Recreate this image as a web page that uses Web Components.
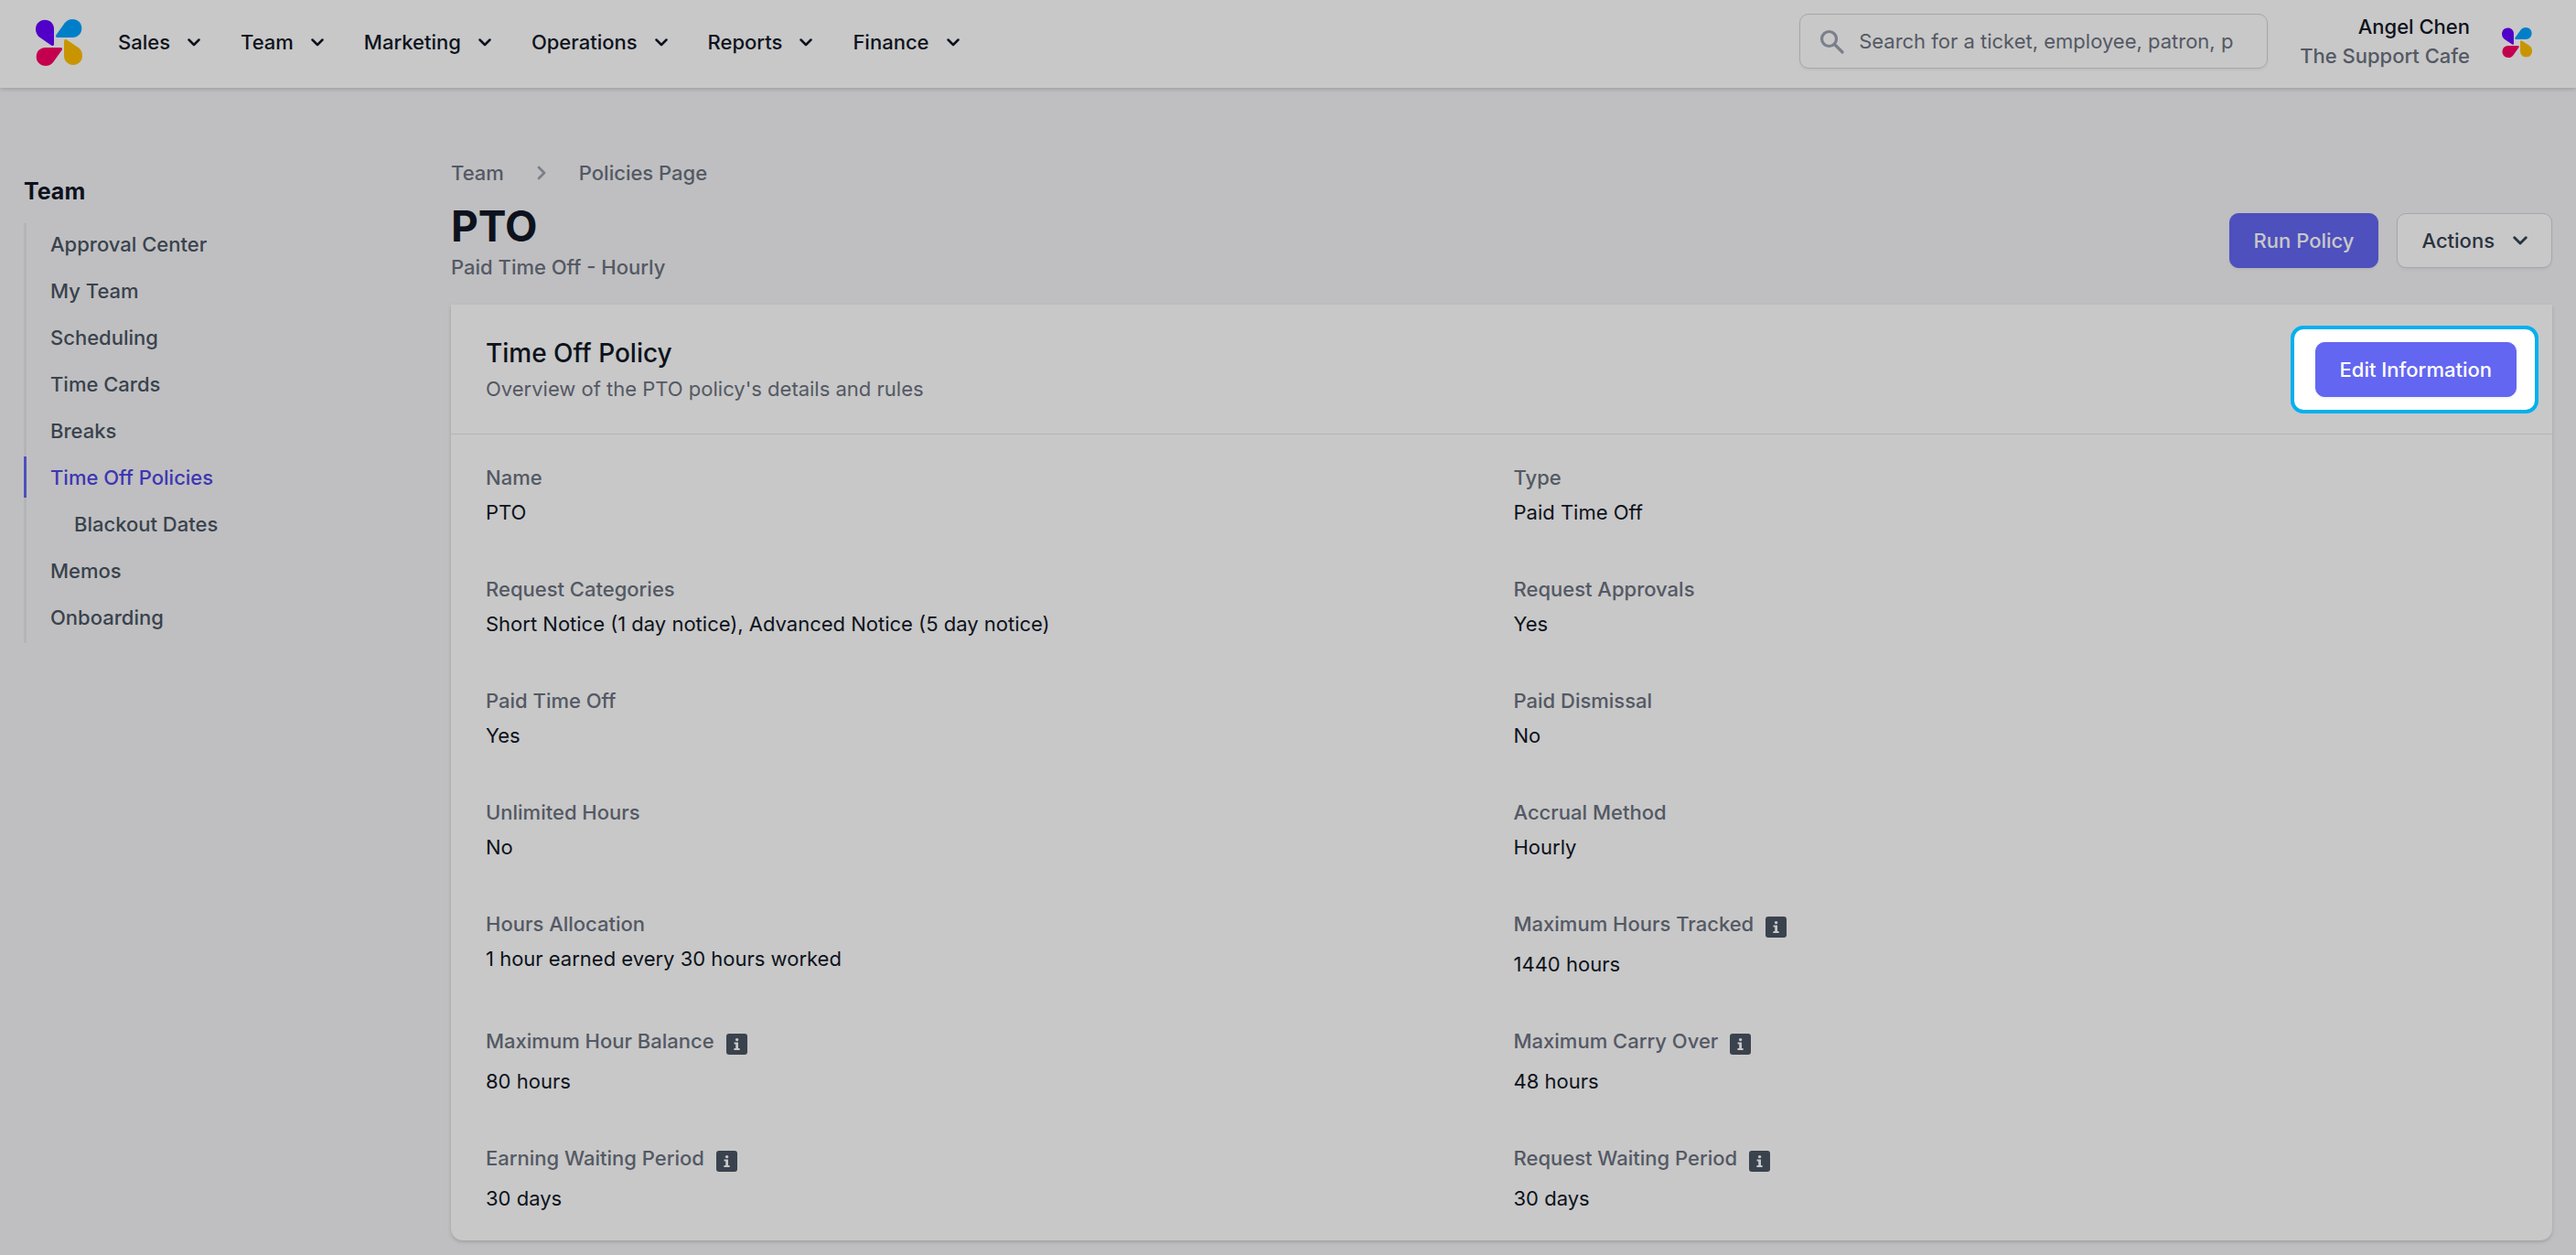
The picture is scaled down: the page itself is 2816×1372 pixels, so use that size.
<!DOCTYPE html>
<html lang="en">
<head>
<meta charset="utf-8">
<title>PTO - Time Off Policies</title>
<style>
  body {
    margin: 0;
    background: #f4f4f6;
    color: #111827;
    font: 400 22px/32px Inter, "Liberation Sans", sans-serif;
  }
</style>
</head>
<body>
<policy-app></policy-app>
<script>
const define = (name, html, setup) => {
  const template = document.createElement('template');
  template.innerHTML = html;
  customElements.define(name, class extends HTMLElement {
    constructor() {
      super();
      this.attachShadow({ mode: 'open' }).append(template.content.cloneNode(true));
    }
    connectedCallback() {
      if (setup) setup(this, this.shadowRoot);
    }
  });
};

define('brand-mark', `
  <style>
    :host { display: block; width: 51px; flex: none; }
    :host([small]) { width: 33px; }
    svg { display: block; width: 100%; height: auto; }
  </style>
  <svg viewBox="57 60 153 153" aria-hidden="true">
    <path fill="#6600ff" d="M117 92C117 74 104 62 87 62C70 62 57 75 57 92C57 104 62 113 71 120L109 146Q117 150 117 142Z"/>
    <path fill="#00a3ff" d="M178 60C195 60 208 73 208 90C208 107 195 120 178 120H128Q120 119 124 112L152 73C159 64 167 60 178 60Z"/>
    <path fill="#fa0064" d="M89 153H138Q147 154 143 161L115 200C108 209 100 213 89 213C72 213 59 200 59 183C59 166 72 153 89 153Z"/>
    <path fill="#ffbf00" d="M150 132Q151 123 158 127L197 153C206 160 210 169 210 180C210 197 197 210 180 210C163 210 150 197 150 180Z"/>
  </svg>`);

define('chevron-icon', `
  <style>
    :host { display: block; width: 14px; flex: none; }
    :host([large]) { width: 16px; }
    svg { display: block; width: 100%; height: auto; }
  </style>
  <svg viewBox="0 0 14 9" fill="none" stroke="currentColor" stroke-width="2.5" stroke-linecap="round" stroke-linejoin="round" aria-hidden="true">
    <path d="M1.5 1.5L7 7L12.5 1.5"/>
  </svg>`);

define('nav-menu', `
  <style>
    :host { display: block; }
    button {
      display: flex; align-items: center; gap: 19px;
      border: 0; padding: 0; background: none;
      color: #111827; font: inherit; font-weight: 500;
    }
  </style>
  <button type="button"><slot></slot><chevron-icon></chevron-icon></button>`);

define('search-box', `
  <style>
    :host { display: block; width: 512px; }
    label {
      display: flex; align-items: center; gap: 16px;
      box-sizing: border-box; height: 60px; padding: 0 16px 0 21px;
      border: 1px solid #d1d5db; border-radius: 10px; background: #fff;
      box-shadow: 0 2px 3px rgba(0, 0, 0, .05);
    }
    svg { width: 27px; height: 27px; flex: none; color: #9ca3af; }
    input {
      flex: 1; min-width: 0; padding: 0; border: 0; outline: 0;
      background: none; color: #111827; font: inherit;
    }
    input::placeholder { color: #6b7280; opacity: 1; }
  </style>
  <label>
    <svg viewBox="0 0 27 27" fill="none" stroke="currentColor" stroke-width="3.2" stroke-linecap="round" aria-hidden="true">
      <circle cx="10.5" cy="10.5" r="8"/><path d="M16.5 16.5L25 25"/>
    </svg>
    <input type="search" aria-label="Search" placeholder="Search for a ticket, employee, patron, p">
  </label>`);

define('app-header', `
  <style>
    :host {
      display: flex; align-items: center; justify-content: space-between;
      box-sizing: border-box; height: 96px; padding: 0 48px 4px 39px;
      background: #fff;
      box-shadow: 0 2px 5px rgba(0, 0, 0, .1), 0 2px 3px rgba(0, 0, 0, .06);
    }
    nav { display: flex; align-items: center; gap: 44px; }
    brand-mark:not([small]) { margin-right: -5px; }
    .right { display: flex; align-items: center; }
    search-box { margin: 0 35px 2px 0; }
    .user { margin-right: 35px; padding-bottom: 2px; text-align: right; color: #6b7280; font-weight: 500; }
    .user strong { display: block; color: #111827; font-weight: 500; }
  </style>
  <nav aria-label="Main">
    <brand-mark></brand-mark>
    <nav-menu>Sales</nav-menu>
    <nav-menu>Team</nav-menu>
    <nav-menu>Marketing</nav-menu>
    <nav-menu>Operations</nav-menu>
    <nav-menu>Reports</nav-menu>
    <nav-menu>Finance</nav-menu>
  </nav>
  <div class="right">
    <search-box></search-box>
    <div class="user"><strong>Angel Chen</strong>The Support Cafe</div>
    <brand-mark small></brand-mark>
  </div>`);

define('side-link', `
  <style>
    :host { display: block; height: 45px; padding-bottom: 6px; border-left: 3px solid #e5e7eb; }
    a {
      display: flex; align-items: center; height: 100%;
      margin-left: -3px; padding-left: 26px; border-left: 3px solid transparent;
      box-sizing: border-box; color: #4b5563; font-weight: 500; text-decoration: none;
    }
    :host([nested]) a { padding-left: 52px; }
    :host([active]) a { border-color: #6366f1; color: #4f46e5; }
  </style>
  <a href="#"><slot></slot></a>`);

define('side-nav', `
  <style>
    :host { display: block; padding-top: 17px; }
    h2 { margin: 0 0 16px; font-size: 25px; line-height: 38px; font-weight: 700; }
  </style>
  <h2>Team</h2>
  <nav aria-label="Team">
    <side-link>Approval Center</side-link>
    <side-link>My Team</side-link>
    <side-link>Scheduling</side-link>
    <side-link>Time Cards</side-link>
    <side-link>Breaks</side-link>
    <side-link active>Time Off Policies</side-link>
    <side-link nested>Blackout Dates</side-link>
    <side-link>Memos</side-link>
    <side-link>Onboarding</side-link>
  </nav>`);

define('ui-button', `
  <style>
    :host { display: block; }
    button {
      display: flex; align-items: center; gap: 20px;
      box-sizing: border-box; height: 60px; padding: 0 26px;
      border: 1px solid #6366f1; border-radius: 10px;
      background: #6366f1; color: #fff;
      box-shadow: 0 2px 3px rgba(0, 0, 0, .05);
      font: inherit; font-weight: 500; white-space: nowrap;
    }
    :host([plain]) button { border-color: #d1d5db; background: #fff; color: #374151; }
  </style>
  <button type="button"><slot></slot></button>`);

define('page-heading', `
  <style>
    :host { display: block; color: #6b7280; font-weight: 500; }
    nav { display: flex; align-items: center; gap: 36px; margin-bottom: 13px; }
    nav svg { width: 10px; height: 16px; color: #9ca3af; }
    a { color: inherit; text-decoration: none; }
    .row { display: flex; align-items: center; justify-content: space-between; }
    h1 { margin: 0; color: #111827; font-size: 46px; line-height: 58px; font-weight: 700; }
    p { margin: 0; }
    .actions { display: flex; gap: 20px; }
  </style>
  <nav aria-label="Breadcrumb">
    <a href="#">Team</a>
    <svg viewBox="0 0 10 16" fill="none" stroke="currentColor" stroke-width="2.8" stroke-linecap="round" stroke-linejoin="round" aria-hidden="true"><path d="M2 2L8 8L2 14"/></svg>
    <a href="#">Policies Page</a>
  </nav>
  <div class="row">
    <div><h1>PTO</h1><p>Paid Time Off - Hourly</p></div>
    <div class="actions">
      <ui-button>Run Policy</ui-button>
      <ui-button plain>Actions<chevron-icon large></chevron-icon></ui-button>
    </div>
  </div>`);

/* Dims the whole page except for the box round its content. */
define('tour-spotlight', `
  <style>
    :host {
      display: block; position: relative; z-index: 10;
      padding: 14px 20px 14px 23px;
      border: 4px solid #00b0f0; border-radius: 14px; background: #fff;
      box-shadow: 0 0 0 4000px rgba(0, 0, 0, .216);
    }
  </style>
  <slot></slot>`);

define('detail-item', `
  <style>
    :host { display: block; }
    .label { display: flex; gap: 13px; margin-bottom: 6px; color: #6b7280; font-weight: 500; }
    svg { display: none; width: 23px; height: 23px; margin-top: 8px; color: #4b5563; }
    :host([info]) .label { height: 38px; }
    :host([info]) svg { display: block; }
  </style>
  <div class="label"><span></span>
    <svg viewBox="0 0 23 23" aria-hidden="true">
      <rect width="23" height="23" rx="3" fill="currentColor"/>
      <circle cx="11.6" cy="6.6" r="1.7" fill="#fff"/>
      <path fill="#fff" d="M8.6 9.6H13V16H14.6V18H8.4V16H10.2V11.6H8.6Z"/>
    </svg>
  </div>
  <slot></slot>`,
  (host, root) => { root.querySelector('span').textContent = host.getAttribute('label'); });

define('policy-card', `
  <style>
    :host {
      display: block; background: #fff; border-radius: 0 0 13px 13px;
      box-shadow: 0 2px 5px rgba(0, 0, 0, .1), 0 2px 3px rgba(0, 0, 0, .06);
    }
    header {
      display: flex; align-items: center; justify-content: space-between;
      height: 141px; padding: 0 15px 0 38px; border-bottom: 1px solid #e5e7eb;
    }
    h2 { margin: 0 0 4px; font-size: 28px; line-height: 38px; font-weight: 500; }
    p { margin: 0; color: #6b7280; }
    .details {
      display: grid; grid-template-columns: 1fr 1fr; gap: 52px 26px;
      padding: 31px 38px 30px;
    }
  </style>
  <header>
    <div><h2>Time Off Policy</h2><p>Overview of the PTO policy's details and rules</p></div>
    <tour-spotlight><ui-button>Edit Information</ui-button></tour-spotlight>
  </header>
  <div class="details">
    <detail-item label="Name">PTO</detail-item>
    <detail-item label="Type">Paid Time Off</detail-item>
    <detail-item label="Request Categories">Short Notice (1 day notice), Advanced Notice (5 day notice)</detail-item>
    <detail-item label="Request Approvals">Yes</detail-item>
    <detail-item label="Paid Time Off">Yes</detail-item>
    <detail-item label="Paid Dismissal">No</detail-item>
    <detail-item label="Unlimited Hours">No</detail-item>
    <detail-item label="Accrual Method">Hourly</detail-item>
    <detail-item label="Hours Allocation">1 hour earned every 30 hours worked</detail-item>
    <detail-item label="Maximum Hours Tracked" info>1440 hours</detail-item>
    <detail-item label="Maximum Hour Balance" info>80 hours</detail-item>
    <detail-item label="Maximum Carry Over" info>48 hours</detail-item>
    <detail-item label="Earning Waiting Period" info>30 days</detail-item>
    <detail-item label="Request Waiting Period" info>30 days</detail-item>
  </div>`);

define('policy-app', `
  <style>
    :host { display: block; min-height: 100vh; }
    .page {
      display: grid; grid-template-columns: 441px 1fr; gap: 26px;
      padding: 77px 26px 13px;
    }
    page-heading { margin-bottom: 25px; }
  </style>
  <app-header></app-header>
  <div class="page">
    <side-nav></side-nav>
    <main><page-heading></page-heading><policy-card></policy-card></main>
  </div>`);
</script>
</body>
</html>
